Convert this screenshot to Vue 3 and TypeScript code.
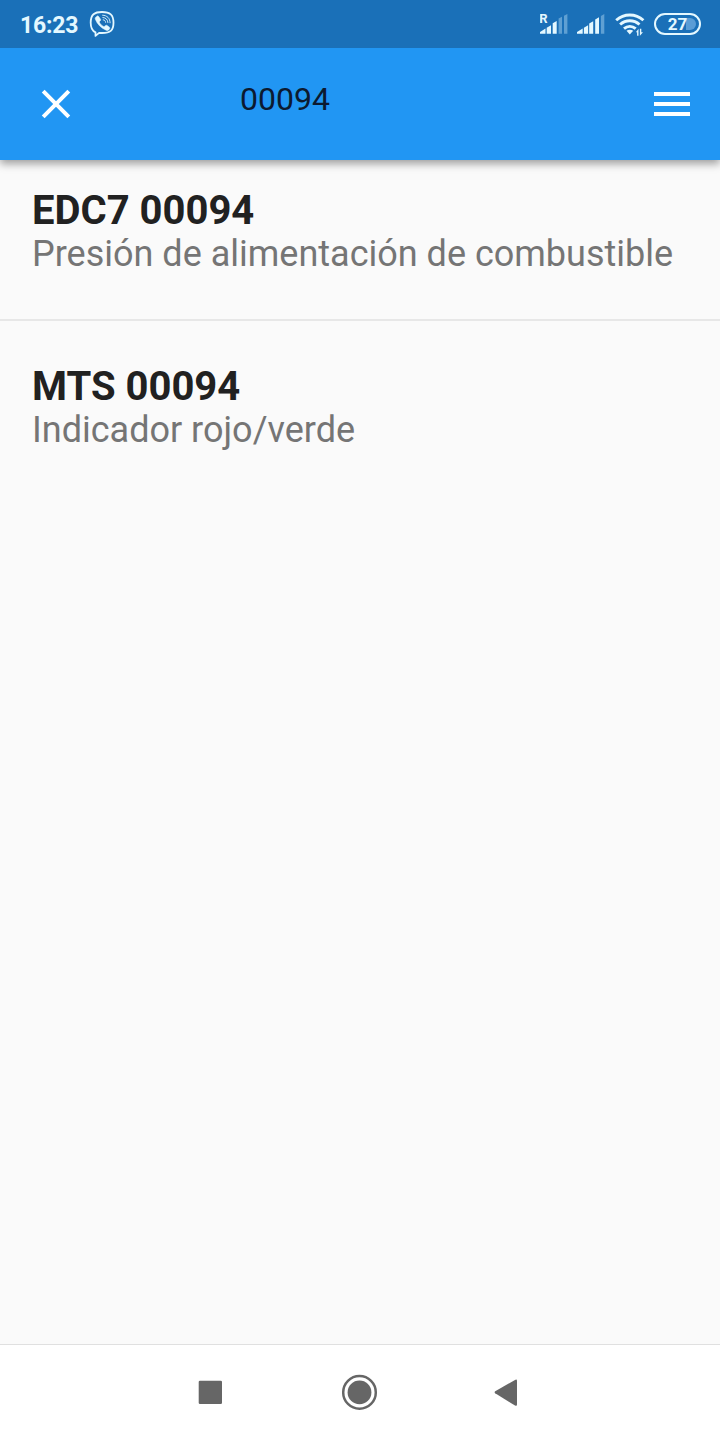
<script setup lang="ts">
interface Fault {
  code: string
  description: string
}

const query = '00094'
const batteryLevel = 27

const faults: Fault[] = [
  { code: 'EDC7 00094', description: 'Presión de alimentación de combustible' },
  { code: 'MTS 00094', description: 'Indicador rojo/verde' },
]
</script>

<template>
  <div class="screen">
    <header class="status">
      <span class="clock">16:23</span>
      <svg class="viber" width="28" height="28" viewBox="0 0 28 28" fill="none" stroke="#e4f8ff" stroke-linecap="round" stroke-linejoin="round">
        <path stroke-width="1.8" d="M14 2C6.500 2 2.700 4.400 2.700 12.700c0 5.500 1.500 8.200 4.800 9.600v3.600l3.600-3c1 .1 2 .1 3 .1 8 0 11.400-2.300 11.400-10.300S22 2 14 2Z" />
        <path fill="#e4f8ff" stroke-width=".5" d="M9.300 6.200c.8-.4 1.300.1 1.900 1l1.300 2c.4.8.1 1.300-.5 1.800-.9.7-.7 1.300.1 2.500.9 1.300 2 2.300 3.300 2.900.7.3 1.100.2 1.600-.4.700-.9 1.300-1 2.100-.5l2 1.400c.8.600 1 1.200.4 2-1 1.400-2 1.900-3.400 1.300-5.200-2.300-8.800-5.900-10.800-11-.5-1.300.4-2.300 2-3Z" />
        <path stroke-width=".9" d="M14.600 5.200c4.600.2 7.400 3 7.500 7.600M14.900 7.500c3 .2 4.800 2 5 5M15.200 9.800c1.500.1 2.300 1 2.400 2.500" />
      </svg>
      <div class="indicators">
        <svg class="signal" width="28" height="24" viewBox="0 0 28 24">
          <g fill="#e4f8ff">
            <text class="roaming" x="-.8" y="10.500">R</text>
            <path d="M0 21.800v-1.800l5.500-3.500v5.300ZM6.700 21.800v-6l4.300-2.500v8.500ZM12.700 21.800V11.300L16.700 9v12.800Z" />
          </g>
          <path fill="#5fa0d3" d="M18.600 21.800V6.600L22 4.700v17.100ZM24 21.800V3.700L27.400 2v19.800Z" />
        </svg>
        <svg class="signal second" width="28" height="24" viewBox="0 0 28 24">
          <path fill="#e4f8ff" d="M0 21.800v-1.800l5.700-3.500v5.300ZM6.900 21.800v-6l4.200-2.500v8.500ZM12.200 21.800V11.600l4-2.300v12.500ZM18.200 21.800V7.400L22 5.200v16.600Z" />
          <path fill="#5fa0d3" d="M23.900 21.800V3.900L27.300 2v19.800Z" />
        </svg>
        <svg class="wifi" width="30" height="24" viewBox="0 0 30 24" fill="none" stroke="#e4f8ff">
          <g stroke-width="2.900">
            <path d="M1.200 8.300c7.800-7.100 19.400-7.100 27.200 0" />
            <path d="M5.100 12.500c5.600-5 13.800-5 19.400 0" />
            <path d="M9 16.700c3.500-3 8.200-3 11.700 0" />
          </g>
          <path fill="#e4f8ff" stroke="none" d="M11.500 18.800c1.800-1.500 4.900-1.500 6.700 0l-3.400 3.700Z" />
          <path fill="#e4f8ff" stroke="none" d="m20.900 20.300 2.600-3.500v7h-1.400v-3.500ZM24.900 16.800h1.400v3.500H28l-3.100 3.500Z" />
        </svg>
        <div class="battery"><span>{{ batteryLevel }}</span><i class="charge"></i></div>
      </div>
    </header>

    <nav class="toolbar">
      <svg class="close" width="32" height="32" viewBox="0 0 32 32">
        <path d="m3.200 3.200 25.600 25.600m0-25.600L3.200 28.800" stroke="#fff" stroke-width="4" />
      </svg>
      <span class="query">{{ query }}</span>
      <svg class="menu" width="36" height="24" viewBox="0 0 36 24">
        <path fill="#fff" d="M0 0h36v4H0zM0 10h36v4H0zM0 20h36v4H0z" />
      </svg>
    </nav>

    <main class="results">
      <template v-for="(fault, index) in faults" :key="fault.code">
        <div v-if="index > 0" class="divider"></div>
        <article class="fault">
          <h2>{{ fault.code }}</h2>
          <p>{{ fault.description }}</p>
        </article>
      </template>
    </main>

    <footer class="navigation">
      <svg width="360" height="48" viewBox="0 0 360 48" fill="#666">
        <rect x="18.700" y="11.700" width="23.300" height="23.300" rx="1.300" />
        <circle cx="179.500" cy="23.400" r="11.900" />
        <circle cx="179.500" cy="23.400" r="16.300" fill="none" stroke="#666" stroke-width="2.500" />
        <path d="M315.200 22.300 335 10.900q2-1 2 1v23.600q0 2-2 1L315.200 24.300q-1.200-1 0-2Z" />
      </svg>
    </footer>
  </div>
</template>

<style>
body {
  margin: 0;
  background: #fafafa;
}
</style>

<style scoped>
.screen {
  display: flex;
  flex-direction: column;
  width: 720px;
  height: 1440px;
  overflow: hidden;
  background: #fafafa;
  font-family: Roboto, "Liberation Sans", sans-serif;
}

.status {
  position: relative;
  z-index: 2;
  display: flex;
  align-items: center;
  box-sizing: border-box;
  height: 48px;
  flex: none;
  padding: 0 19px 0 20px;
  background: #1a70b8;
  color: #e4f8ff;
}

.clock {
  width: 68px;
  padding-top: 2px;
  font-size: 23px;
  font-weight: 700;
  letter-spacing: -0.2px;
  line-height: 27px;
}

.indicators {
  display: flex;
  align-items: center;
  margin-left: auto;
}

.signal {
  display: block;
}

.second {
  margin-left: 9px;
}

.wifi {
  margin-left: 10px;
}

.roaming {
  font-size: 13px;
  font-weight: 700;
}

.battery {
  position: relative;
  box-sizing: border-box;
  width: 47px;
  height: 22px;
  margin-left: 9px;
  border: 2px solid #e4f8ff;
  border-radius: 11px;
  font-size: 17px;
  font-weight: 700;
  line-height: 19px;
  text-align: center;
}

.battery span {
  position: relative;
  z-index: 1;
}

.charge {
  position: absolute;
  top: 3px;
  right: 3px;
  width: 10px;
  height: 12px;
  border-radius: 0 6px 6px 0;
  background: #5a9dd6;
}

.toolbar {
  position: relative;
  z-index: 1;
  display: flex;
  align-items: center;
  box-sizing: border-box;
  height: 112px;
  flex: none;
  padding: 0 30px 0 40px;
  background: #2196f3;
  box-shadow: 0 4px 8px rgba(0, 0, 0, 0.36);
}

.query {
  margin: 0 auto 10px 168px;
  color: #0c1a30;
  font-size: 32px;
  line-height: 38px;
}

.results {
  flex: 1;
}

.fault {
  box-sizing: border-box;
  height: 144px;
  padding: 28px 32px 0;
}

.fault h2,
.fault p {
  margin: 0;
  white-space: nowrap;
}

.fault h2 {
  margin-bottom: -1px;
  color: #212121;
  font-size: 40px;
  font-weight: 700;
  line-height: 46px;
}

.fault p {
  color: #757575;
  font-size: 36px;
  line-height: 42px;
}

.divider {
  height: 2px;
  margin: 15px 0;
  background: #e7e7e7;
}

.navigation {
  display: flex;
  align-items: center;
  justify-content: center;
  box-sizing: border-box;
  height: 96px;
  flex: none;
  border-top: 1px solid #e0e0e0;
  background: #fff;
}
</style>
